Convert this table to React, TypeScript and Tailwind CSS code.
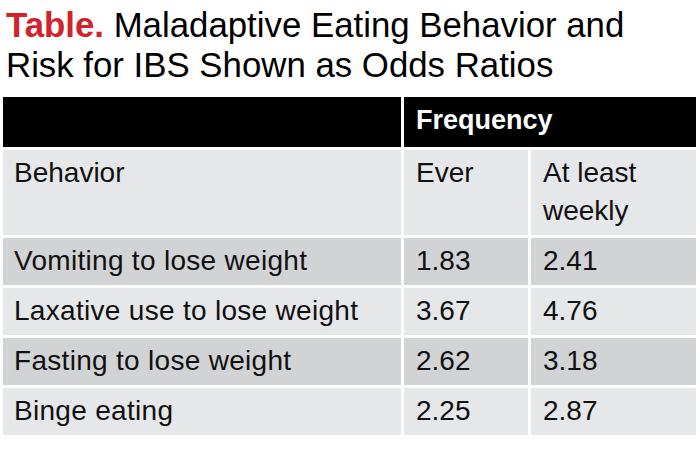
import React from "react";

const rows = [
  { b: "Vomiting to lose weight", e: "1.83", w: "2.41", dark: true },
  { b: "Laxative use to lose weight", e: "3.67", w: "4.76", dark: false },
  { b: "Fasting to lose weight", e: "2.62", w: "3.18", dark: true },
  { b: "Binge eating", e: "2.25", w: "2.87", dark: false },
];

export default function App() {
  return (
    <div
      className="w-[700px] h-[454px] bg-white overflow-hidden text-black"
      style={{ fontFamily: '"Liberation Sans", Arial, sans-serif' }}
    >
      <div className="pl-[6px] pt-[5px] text-[34.8px] leading-[40px]">
        <span className="text-[#d2232a] font-bold">Table.</span> Maladaptive Eating Behavior and
        <br />
        Risk for IBS Shown as Odds Ratios
      </div>
      <div className="ml-[3px] mt-[12px] grid grid-cols-[398px_124px_165px] gap-[3px] text-[28px] leading-[38px] text-[#111]">
        <div className="bg-black h-[50px]" />
        <div className="col-span-2 bg-black h-[50px] pl-[12px] pt-[4px] text-[27px] text-white font-bold">
          Frequency
        </div>
        <div className="bg-[#e6e7e8] h-[85px] pl-[11px] pt-[4px]">Behavior</div>
        <div className="bg-[#e6e7e8] pl-[12px] pt-[4px]">Ever</div>
        <div className="bg-[#e6e7e8] pl-[12px] pt-[4px]">
          At least
          <br />
          weekly
        </div>
        {rows.map((r) => (
          <React.Fragment key={r.b}>
            <div className={`${r.dark ? "bg-[#d1d3d4]" : "bg-[#e6e7e8]"} h-[47px] pl-[11px] pt-[4px] tracking-[0.3px]`}>{r.b}</div>
            <div className={`${r.dark ? "bg-[#d1d3d4]" : "bg-[#e6e7e8]"} pl-[12px] pt-[4px]`}>{r.e}</div>
            <div className={`${r.dark ? "bg-[#d1d3d4]" : "bg-[#e6e7e8]"} pl-[12px] pt-[4px]`}>{r.w}</div>
          </React.Fragment>
        ))}
      </div>
    </div>
  );
}
